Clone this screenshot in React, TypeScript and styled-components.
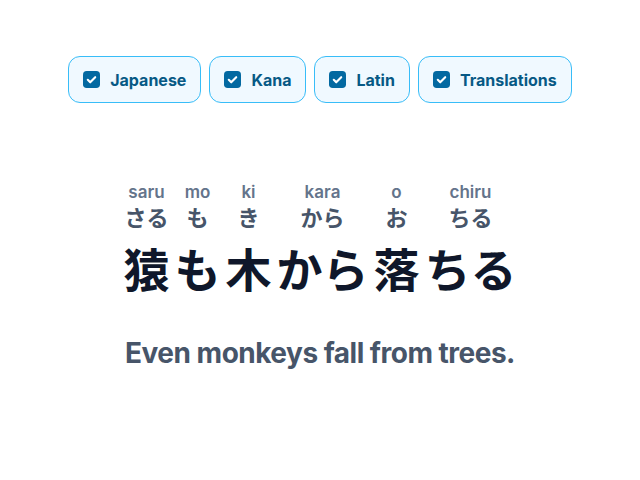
import styled, { createGlobalStyle } from "styled-components";

type Word = { romaji: string; kana: string; text: string };

const words: Word[] = [
  { romaji: "saru", kana: "さる", text: "猿" },
  { romaji: "mo", kana: "も", text: "も" },
  { romaji: "ki", kana: "き", text: "木" },
  { romaji: "kara", kana: "から", text: "から" },
  { romaji: "o", kana: "お", text: "落" },
  { romaji: "chiru", kana: "ちる", text: "ちる" },
];

const toggles = ["Japanese", "Kana", "Latin", "Translations"];

const GlobalStyle = createGlobalStyle`
  body {
    margin: 0;
    background: #ffffff;
    font-family: Inter, "Noto Sans CJK JP", sans-serif;
  }
`;

function CheckIcon() {
  return (
    <svg width="17" height="17" viewBox="0 0 16 16">
      <rect width="16" height="16" rx="3.5" fill="#0369a1" />
      <path
        d="M4.5 8.3l2.3 2.3 4.7-4.8"
        fill="none"
        stroke="#ffffff"
        strokeWidth="2"
        strokeLinecap="round"
        strokeLinejoin="round"
      />
    </svg>
  );
}

export default function App() {
  return (
    <>
      <GlobalStyle />
      <Page>
        <Toolbar>
          {toggles.map((t) => (
            <Toggle key={t}>
              <CheckIcon />
              {t}
            </Toggle>
          ))}
        </Toolbar>
        <Sentence lang="ja">
          {words.map((w, i) => (
            <Column key={i}>
              <Romaji>{w.romaji}</Romaji>
              <Kana>{w.kana}</Kana>
              <Kanji>{w.text}</Kanji>
            </Column>
          ))}
        </Sentence>
        <Translation>Even monkeys fall from trees.</Translation>
      </Page>
    </>
  );
}

const Page = styled.main`
  display: flex;
  flex-direction: column;
  align-items: center;
  padding-top: 56px;
`;

const Toolbar = styled.div`
  display: flex;
  gap: 8px;
`;

const Toggle = styled.label`
  display: flex;
  align-items: center;
  gap: 10px;
  height: 47px;
  box-sizing: border-box;
  padding: 0 14px;
  border: 1px solid #38bdf8;
  border-radius: 12px;
  background: #f0f9ff;
  color: #075985;
  font-size: 16px;
  font-weight: 700;
`;

const Sentence = styled.div`
  display: flex;
  gap: 5px;
  margin-top: 79px;
`;

const Column = styled.div`
  display: flex;
  flex-direction: column;
  align-items: center;
`;

const Romaji = styled.span`
  font-size: 17px;
  font-weight: 600;
  line-height: 20px;
  color: #64748b;
`;

const Kana = styled.span`
  font-size: 22px;
  font-weight: 700;
  line-height: 32px;
  color: #475569;
`;

const Kanji = styled.span`
  margin-top: 8px;
  font-size: 46px;
  font-weight: 700;
  line-height: 56px;
  color: #0f172a;
`;

const Translation = styled.p`
  margin: 37px 0 0;
  font-size: 28px;
  line-height: 36px;
  font-weight: 700;
  letter-spacing: -0.5px;
  color: #475569;
`;
